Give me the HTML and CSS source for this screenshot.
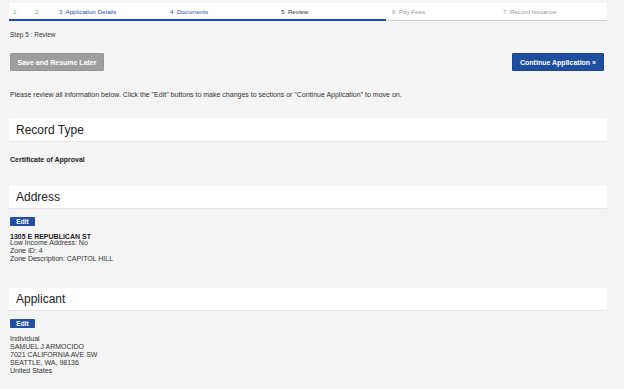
FILE: index.html
```html
<!DOCTYPE html>
<html lang="en">
<head>
    <meta charset="UTF-8">
    <meta name="viewport" content="width=device-width, initial-scale=1.0">
    <title>Review - Application</title>
    <link rel="stylesheet" href="styles.css">
</head>
<body>
    <div class="page">
        <!-- step bar -->
        <div class="steps">
            <div class="steps-list">
                <span class="step done">1</span>
                <span class="step done">2</span>
                <a href="#" class="step link">3&nbsp; Application Details</a>
                <a href="#" class="step link">4&nbsp; Documents</a>
                <span class="step current">5&nbsp; Review</span>
                <span class="step todo">6&nbsp; Pay Fees</span>
                <span class="step todo">7&nbsp; Record Issuance</span>
            </div>
            <div class="steps-track">
                <div class="steps-fill"></div>
            </div>
        </div>

        <div class="step-label">Step 5 : Review</div>

        <div class="actions">
            <button class="btn btn-grey">Save and Resume Later</button>
            <button class="btn btn-blue">Continue Application &raquo;</button>
        </div>

        <p class="intro">Please review all information below. Click the "Edit" buttons to make changes to sections or "Continue Application" to move on.</p>

        <!-- Record Type -->
        <div class="section">
            <div class="section-header">Record Type</div>
            <div class="section-body">
                <div class="strong-line">Certificate of Approval</div>
            </div>
        </div>

        <!-- Address -->
        <div class="section section-address">
            <div class="section-header">Address</div>
            <div class="section-body">
                <button class="edit-button">Edit</button>
                <div class="address-street">1305 E REPUBLICAN ST</div>
                <div class="info-line">Low Income Address: No</div>
                <div class="info-line">Zone ID: 4</div>
                <div class="info-line">Zone Description: CAPITOL HILL</div>
            </div>
        </div>

        <!-- Applicant -->
        <div class="section section-applicant">
            <div class="section-header">Applicant</div>
            <div class="section-body">
                <button class="edit-button">Edit</button>
                <div class="applicant-info">
                    <div class="info-line">Individual</div>
                    <div class="info-line">SAMUEL J ARMOCIDO</div>
                    <div class="info-line">7021 CALIFORNIA AVE SW</div>
                    <div class="info-line">SEATTLE, WA, 98136</div>
                    <div class="info-line">United States</div>
                </div>
            </div>
        </div>
    </div>
</body>
</html>
```

FILE: styles.css
```css
* {
    margin: 0;
    padding: 0;
    box-sizing: border-box;
    font-family: "Liberation Sans", Arial, sans-serif;
}

body {
    background: #f4f4f4;
    color: #222;
    overflow: hidden;
}

.page {
    padding: 3px 17px 0 9px;
}

/* step bar */
.steps {
    background: white;
}

.steps-list {
    display: grid;
    grid-template-columns: 22px 24px repeat(5, 111px);
    align-items: center;
    height: 16px;
    padding-left: 4px;
    font-size: 6.2px;
}

.step {
    text-decoration: none;
    white-space: nowrap;
}

.step.done {
    color: #6cc46c;
}

.step.link {
    color: #1f4fb4;
}

.step.current {
    color: #333;
}

.step.todo {
    color: #9a9a9a;
}

.steps-track {
    height: 2px;
    border-bottom: 1px solid #cfcfcf;
    background: #f4f4f4;
}

.steps-fill {
    width: 377px;
    height: 2px;
    background: #1a49b8;
}

.step-label {
    margin-top: 10px;
    padding-left: 1px;
    font-size: 6.5px;
    line-height: 8px;
    color: #333;
}

/* buttons */
.actions {
    display: flex;
    justify-content: space-between;
    margin-top: 14px;
    padding: 0 3px 0 1px;
}

.btn {
    height: 18px;
    border-radius: 1px;
    color: white;
    font-size: 7px;
    font-weight: bold;
    border: 1px solid;
    cursor: pointer;
}

.btn-grey {
    width: 94px;
    background: #9e9e9e;
    border-color: #969696;
}

.btn-blue {
    width: 92px;
    background: #1f4e9f;
    border-color: #1b468f;
}

.intro {
    margin-top: 19px;
    padding-left: 1px;
    font-size: 7px;
    line-height: 9px;
    color: #333;
}

/* sections */
.section {
    margin-top: 19px;
}

.section-address {
    margin-top: 22px;
}

.section-applicant {
    margin-top: 25px;
}

.section-header {
    background: white;
    height: 24px;
    line-height: 24px;
    padding-left: 7px;
    font-size: 12px;
    color: #222;
    border-bottom: 1px solid #e6e6e6;
}

.section-address .section-header,
.section-applicant .section-header {
    height: 23px;
    line-height: 22px;
}

.section-body {
    padding-left: 1px;
    padding-top: 14px;
}

.section-address .section-body,
.section-applicant .section-body {
    padding-top: 8px;
}

.strong-line {
    font-size: 7px;
    font-weight: bold;
    line-height: 8px;
    color: #222;
}

.edit-button {
    display: block;
    width: 25px;
    height: 9px;
    background: #1f4fa3;
    color: white;
    border: none;
    border-radius: 1px;
    font-size: 6.5px;
    font-weight: bold;
    line-height: 9px;
}

.address-street {
    margin-top: 8px;
    font-size: 7px;
    font-weight: bold;
    line-height: 6px;
    color: #222;
}

.info-line {
    font-size: 7px;
    line-height: 8px;
    color: #333;
}

.address-street + .info-line {
    margin-top: -1px;
}

.applicant-info {
    margin-top: 7px;
}
```
